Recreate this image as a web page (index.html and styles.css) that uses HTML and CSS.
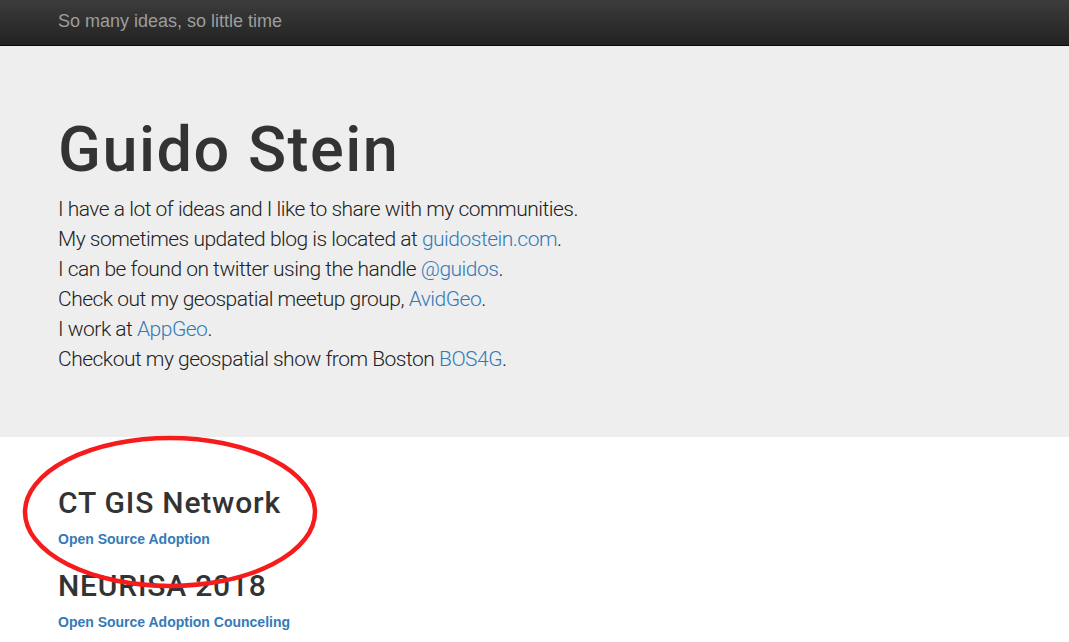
FILE: index.html
```html
<!DOCTYPE html>
<html>
<head>
<meta charset="utf-8">
<title>Guido Stein</title>
<link rel="stylesheet" href="styles.css">
</head>
<body>
<nav class="navbar">
  <div class="container"><span class="brand">So many ideas, so little time</span></div>
</nav>
<header class="jumbotron">
  <div class="container">
    <h1 class="title">Guido Stein</h1>
    <p class="intro">
      I have a lot of ideas and I like to share with my communities.<br>
      My sometimes updated blog is located at <a href="#">guidostein.com</a>.<br>
      I can be found on twitter using the handle <a href="#">@guidos</a>.<br>
      Check out my geospatial meetup group, <a href="#">AvidGeo</a>.<br>
      I work at <a href="#">AppGeo</a>.<br>
      Checkout my geospatial show from Boston <a href="#">BOS4G</a>.
    </p>
  </div>
</header>
<main class="container talks">
  <section class="talk">
    <h2 class="talk-title">CT GIS Network</h2>
    <a class="talk-link" href="#">Open Source Adoption</a>
  </section>
  <section class="talk">
    <h2 class="talk-title">NEURISA 2018</h2>
    <a class="talk-link" href="#">Open Source Adoption Counceling</a>
  </section>
</main>
<svg class="circle-mark" width="320" height="170" viewBox="0 0 320 170">
  <ellipse cx="148" cy="79" rx="145" ry="74" fill="none" stroke="#f71c1c" stroke-width="4.5"/>
</svg>
</body>
</html>
```
FILE: styles.css
```css
html, body {
  margin: 0;
  padding: 0;
  background: #fff;
  font-family: "Liberation Sans", Arial, sans-serif;
  color: #333;
  overflow: hidden;
}
.container {
  padding-left: 58px;
  padding-right: 58px;
}
.navbar {
  height: 46px;
  box-sizing: border-box;
  background: linear-gradient(to bottom, #3c3c3c 0%, #222 100%);
  border-bottom: 1px solid #080808;
  display: flex;
  align-items: center;
}
.brand {
  font-size: 18px;
  line-height: 20px;
  color: #9d9d9d;
  position: relative;
  top: -2px;
}
.jumbotron {
  background: #eee;
  padding: 48px 0 48px;
}
.title {
  font-family: Roboto, "Liberation Sans", sans-serif;
  font-size: 63px;
  font-weight: 500;
  line-height: 69px;
  margin: 21px 0 10px;
  color: #333;
  letter-spacing: 1.5px;
}
.intro {
  font-family: Roboto, "Liberation Sans", sans-serif;
  font-size: 21px;
  line-height: 30px;
  font-weight: 300;
  margin: 0 0 15px;
  color: #222;
  letter-spacing: -0.5px;
}
.intro a, .talk-link {
  color: #337ab7;
  text-decoration: none;
}
.talks {
  padding-top: 49px;
}
.talk-title {
  font-family: Roboto, "Liberation Sans", sans-serif;
  font-size: 30px;
  font-weight: 500;
  line-height: 33px;
  margin: 0 0 10px;
  color: #333;
  letter-spacing: 0.8px;
}
.talk-link {
  display: block;
  font-size: 14px;
  font-weight: bold;
  line-height: 20px;
  margin-bottom: 20px;
}
.circle-mark {
  position: absolute;
  left: 22px;
  top: 433px;
  pointer-events: none;
}
```
